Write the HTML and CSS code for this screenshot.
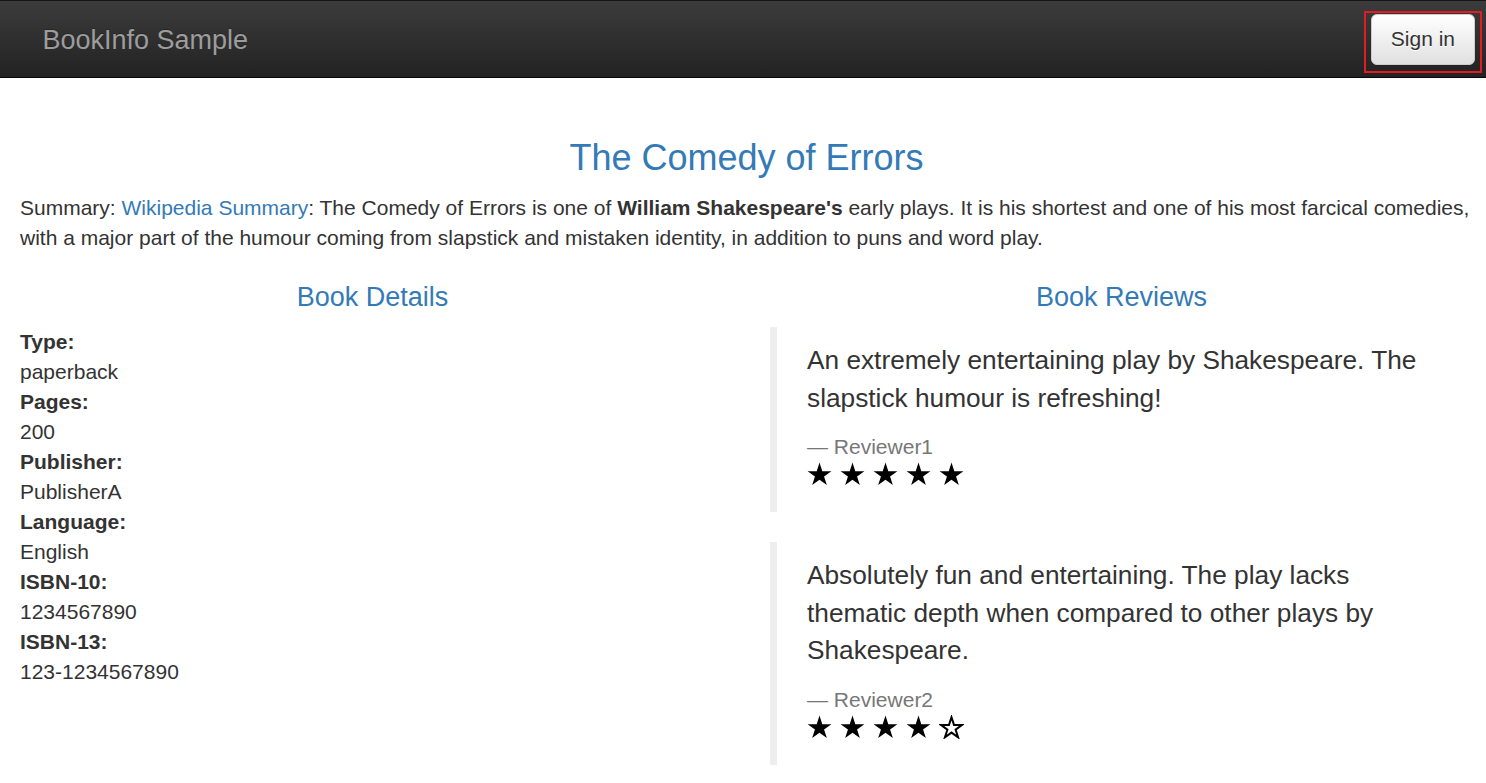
FILE: index.html
```html
<!DOCTYPE html>
<html lang="en">
<head>
<meta charset="utf-8">
<title>Simple Bookstore App</title>
<link rel="stylesheet" href="styles.css">
</head>
<body>
<div class="page">
  <nav class="navbar">
    <a class="brand" href="#">BookInfo Sample</a>
    <div class="signin-wrap">
      <button class="btn-signin" type="button">Sign in</button>
      <span class="highlight"></span>
    </div>
  </nav>

  <main class="content">
    <h3 class="title">The Comedy of Errors</h3>
    <p class="summary">Summary: <a href="#">Wikipedia Summary</a>: The Comedy of Errors is one of <b>William Shakespeare's</b> early plays. It is his shortest and one of his most farcical comedies, with a major part of the humour coming from slapstick and mistaken identity, in addition to puns and word play.</p>

    <div class="row">
      <section class="col">
        <h4 class="section-title">Book Details</h4>
        <dl class="details">
          <dt>Type:</dt><dd>paperback</dd>
          <dt>Pages:</dt><dd>200</dd>
          <dt>Publisher:</dt><dd>PublisherA</dd>
          <dt>Language:</dt><dd>English</dd>
          <dt>ISBN-10:</dt><dd>1234567890</dd>
          <dt>ISBN-13:</dt><dd>123-1234567890</dd>
        </dl>
      </section>
      <section class="col">
        <h4 class="section-title">Book Reviews</h4>
        <blockquote class="review">
          <p>An extremely entertaining play by Shakespeare. The slapstick humour is refreshing!</p>
          <footer class="reviewer">Reviewer1</footer>
          <div class="stars">
            <svg class="star" viewBox="0 0 25 24"><polygon class="full" points="12.5,0.5 15.31,9.13 24.39,9.14 17.05,14.48 19.85,23.11 12.5,17.78 5.15,23.11 7.95,14.48 0.61,9.14 9.69,9.13"/></svg>
            <svg class="star" viewBox="0 0 25 24"><polygon class="full" points="12.5,0.5 15.31,9.13 24.39,9.14 17.05,14.48 19.85,23.11 12.5,17.78 5.15,23.11 7.95,14.48 0.61,9.14 9.69,9.13"/></svg>
            <svg class="star" viewBox="0 0 25 24"><polygon class="full" points="12.5,0.5 15.31,9.13 24.39,9.14 17.05,14.48 19.85,23.11 12.5,17.78 5.15,23.11 7.95,14.48 0.61,9.14 9.69,9.13"/></svg>
            <svg class="star" viewBox="0 0 25 24"><polygon class="full" points="12.5,0.5 15.31,9.13 24.39,9.14 17.05,14.48 19.85,23.11 12.5,17.78 5.15,23.11 7.95,14.48 0.61,9.14 9.69,9.13"/></svg>
            <svg class="star" viewBox="0 0 25 24"><polygon class="full" points="12.5,0.5 15.31,9.13 24.39,9.14 17.05,14.48 19.85,23.11 12.5,17.78 5.15,23.11 7.95,14.48 0.61,9.14 9.69,9.13"/></svg>
          </div>
        </blockquote>
        <blockquote class="review">
          <p>Absolutely fun and entertaining. The play lacks thematic depth when compared to other plays by Shakespeare.</p>
          <footer class="reviewer">Reviewer2</footer>
          <div class="stars">
            <svg class="star" viewBox="0 0 25 24"><polygon class="full" points="12.5,0.5 15.31,9.13 24.39,9.14 17.05,14.48 19.85,23.11 12.5,17.78 5.15,23.11 7.95,14.48 0.61,9.14 9.69,9.13"/></svg>
            <svg class="star" viewBox="0 0 25 24"><polygon class="full" points="12.5,0.5 15.31,9.13 24.39,9.14 17.05,14.48 19.85,23.11 12.5,17.78 5.15,23.11 7.95,14.48 0.61,9.14 9.69,9.13"/></svg>
            <svg class="star" viewBox="0 0 25 24"><polygon class="full" points="12.5,0.5 15.31,9.13 24.39,9.14 17.05,14.48 19.85,23.11 12.5,17.78 5.15,23.11 7.95,14.48 0.61,9.14 9.69,9.13"/></svg>
            <svg class="star" viewBox="0 0 25 24"><polygon class="full" points="12.5,0.5 15.31,9.13 24.39,9.14 17.05,14.48 19.85,23.11 12.5,17.78 5.15,23.11 7.95,14.48 0.61,9.14 9.69,9.13"/></svg>
            <svg class="star" viewBox="0 0 25 24"><polygon class="empty" points="12.5,2.2 15.0,9.9 23.1,9.9 16.6,14.7 19.1,22.3 12.5,17.6 5.9,22.3 8.4,14.7 1.9,9.9 10.0,9.9"/></svg>
          </div>
        </blockquote>
      </section>
    </div>
  </main>
</div>
</body>
</html>
```

FILE: styles.css
```css
html, body {
  margin: 0;
  padding: 0;
  overflow: hidden;
  background: #fff;
}

body {
  font-family: "Liberation Sans", Arial, Helvetica, sans-serif;
  font-size: 21px;
  line-height: 30px;
  color: #333;
}

.page {
  width: 1498px;
  margin-left: -2.5px;
}

/* Navbar */
.navbar {
  position: relative;
  box-sizing: border-box;
  height: 78px;
  display: flex;
  align-items: center;
  justify-content: space-between;
  padding: 0 20.5px 0 22.5px;
  background-image: linear-gradient(to bottom, #3c3c3c 0, #222 100%);
  border-top: 1.5px solid #161616;
  border-bottom: 1.5px solid #080808;
}

.brand {
  padding: 2px 22.5px 0;
  font-size: 27px;
  line-height: 30px;
  color: #9d9d9d;
  text-decoration: none;
  text-shadow: 0 -1px 0 rgba(0, 0, 0, .25);
}

.signin-wrap {
  position: relative;
  display: flex;
}

.btn-signin {
  box-sizing: border-box;
  height: 51px;
  padding: 9px 19px;
  font-family: inherit;
  font-size: 21px;
  line-height: 30px;
  color: #333;
  background-image: linear-gradient(to bottom, #fff 0, #e0e0e0 100%);
  border: 1.5px solid #ccc;
  border-radius: 6px;
  text-shadow: 0 1px 0 #fff;
  box-shadow: inset 0 1px 0 rgba(255, 255, 255, .15), 0 1px 1px rgba(0, 0, 0, .075);
}

.highlight {
  position: absolute;
  top: -3px;
  left: -7px;
  right: -7px;
  bottom: -8px;
  border: 2px solid #e51b23;
  pointer-events: none;
}

/* Content */
.content {
  padding: 60px 22.5px 0;
}

.title {
  margin: 0 0 15px;
  font-size: 36px;
  font-weight: 500;
  line-height: 1.1;
  text-align: center;
  color: #337ab7;
}

.summary {
  margin: 0 0 15px;
}

.summary a {
  color: #337ab7;
  text-decoration: none;
}

.summary b {
  font-weight: 700;
}

.row {
  display: grid;
  grid-template-columns: 750px 748px;
  margin: 0 -22.5px;
}

.col {
  padding: 0 22.5px;
  min-width: 0;
}

.section-title {
  margin: 15px 0 15px;
  font-size: 27px;
  font-weight: 500;
  line-height: 1.1;
  text-align: center;
  color: #337ab7;
}

.details {
  margin: 0 0 30px;
}

.details dt {
  font-weight: 700;
}

.details dd {
  margin: 0;
}

.review {
  margin: 0 0 30px;
  padding: 15px 30px;
  border-left: 7.5px solid #eee;
  font-size: 26.25px;
  line-height: 37.5px;
}

.review p {
  margin: 0 0 15px;
}

.reviewer {
  display: block;
  font-size: 21px;
  line-height: 30px;
  color: #777;
}

.reviewer::before {
  content: "\2014 \00A0";
}

.stars {
  display: flex;
  gap: 8px;
  height: 35px;
  box-sizing: border-box;
}

.star {
  width: 25px;
  height: 24px;
  display: block;
}

.star .full {
  fill: #000;
}

.star .empty {
  fill: #fff;
  stroke: #000;
  stroke-width: 2;
  stroke-linejoin: miter;
}
```
